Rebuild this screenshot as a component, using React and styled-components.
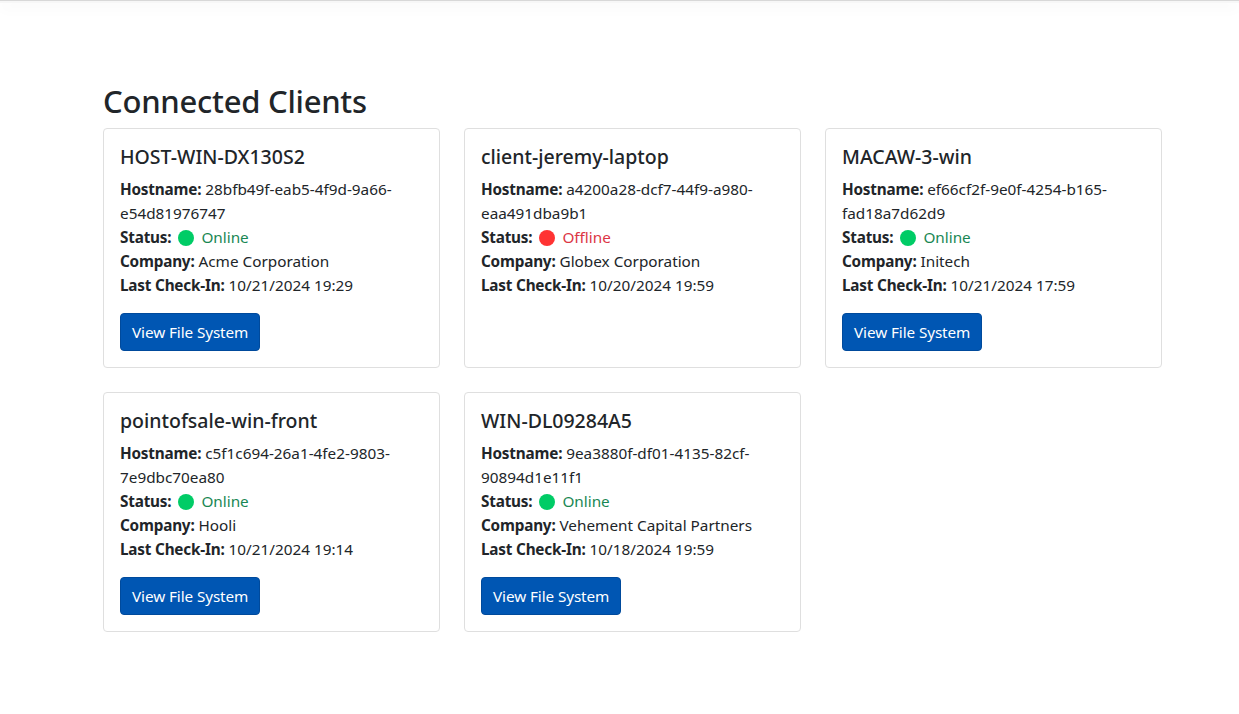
import React from "react";
import styled, { createGlobalStyle } from "styled-components";

const GlobalStyle = createGlobalStyle`
  html, body { margin: 0; padding: 0; background: #fff; }
  body {
    font-family: "Noto Sans", "Open Sans", sans-serif;
    font-size: 16px;
    line-height: 1.5;
    color: #212529;
  }
  * { box-sizing: border-box; }
`;

const TopBar = styled.div`
  height: 3px;
  border-top: 1px solid #d8d8d8;
  box-shadow: 0 4px 14px rgba(0, 0, 0, 0.07);
  background: #f7f7f7;
`;

const Main = styled.main`
  width: 1059px;
  margin: 0 0 0 103px;
  padding-top: 80px;
`;

const Heading = styled.h2`
  margin: 0 0 8px;
  font-size: 31px;
  font-weight: 500;
  line-height: 37px;
  letter-spacing: -0.25px;
`;

const Grid = styled.div`
  display: grid;
  grid-template-columns: repeat(3, 337px);
  column-gap: 24px;
  row-gap: 24px;
  align-items: stretch;
`;

const Card = styled.div`
  border: 1px solid #dfdfdf;
  border-radius: 4px;
  padding: 16px;
  background: #fff;
`;

const Title = styled.h5`
  margin: 0 0 8px;
  font-size: 19.5px;
  font-weight: 500;
  line-height: 24px;
`;

const Info = styled.div`
  font-size: 15.3px;
  line-height: 24px;
  margin-bottom: 16px;
`;

const Line = styled.div`
  word-break: break-word;
`;

const Label = styled.strong`
  font-weight: 700;
  letter-spacing: -0.2px;
`;

const Dot = styled.span`
  display: inline-block;
  width: 16px;
  height: 16px;
  border-radius: 50%;
  background: ${(p) => (p.$online ? "#00cc66" : "#ff3333")};
  vertical-align: -3px;
  margin: 0 7px 0 3px;
`;

const StatusText = styled.span`
  color: ${(p) => (p.$online ? "#198754" : "#dc3545")};
`;

const Button = styled.button`
  font-family: inherit;
  font-size: 15.3px;
  line-height: 24px;
  height: 38px;
  padding: 6px 11px;
  color: #fff;
  background: #0056b3;
  border: 1px solid #004a9c;
  border-radius: 4px;
  letter-spacing: -0.1px;
  cursor: pointer;
`;

const clients = [
  { name: "HOST-WIN-DX130S2", host: "28bfb49f-eab5-4f9d-9a66-e54d81976747", online: true, company: "Acme Corporation", last: "10/21/2024 19:29" },
  { name: "client-jeremy-laptop", host: "a4200a28-dcf7-44f9-a980-eaa491dba9b1", online: false, company: "Globex Corporation", last: "10/20/2024 19:59" },
  { name: "MACAW-3-win", host: "ef66cf2f-9e0f-4254-b165-fad18a7d62d9", online: true, company: "Initech", last: "10/21/2024 17:59" },
  { name: "pointofsale-win-front", host: "c5f1c694-26a1-4fe2-9803-7e9dbc70ea80", online: true, company: "Hooli", last: "10/21/2024 19:14" },
  { name: "WIN-DL09284A5", host: "9ea3880f-df01-4135-82cf-90894d1e11f1", online: true, company: "Vehement Capital Partners", last: "10/18/2024 19:59" },
];

function splitHost(h) {
  const i = h.lastIndexOf("-");
  return [h.slice(0, i + 1), h.slice(i + 1)];
}

export default function App() {
  return (
    <>
      <GlobalStyle />
      <TopBar />
      <Main>
        <Heading>Connected Clients</Heading>
        <Grid>
          {clients.map((c) => {
            const [a, b] = splitHost(c.host);
            return (
              <Card key={c.name}>
                <Title>{c.name}</Title>
                <Info>
                  <Line>
                    <Label>Hostname:</Label> {a}
                    <br />
                    {b}
                  </Line>
                  <Line>
                    <Label>Status:</Label> <Dot $online={c.online} />
                    <StatusText $online={c.online}>{c.online ? "Online" : "Offline"}</StatusText>
                  </Line>
                  <Line>
                    <Label>Company:</Label> {c.company}
                  </Line>
                  <Line>
                    <Label>Last Check-In:</Label> {c.last}
                  </Line>
                </Info>
                {c.online && <Button>View File System</Button>}
              </Card>
            );
          })}
        </Grid>
      </Main>
    </>
  );
}
